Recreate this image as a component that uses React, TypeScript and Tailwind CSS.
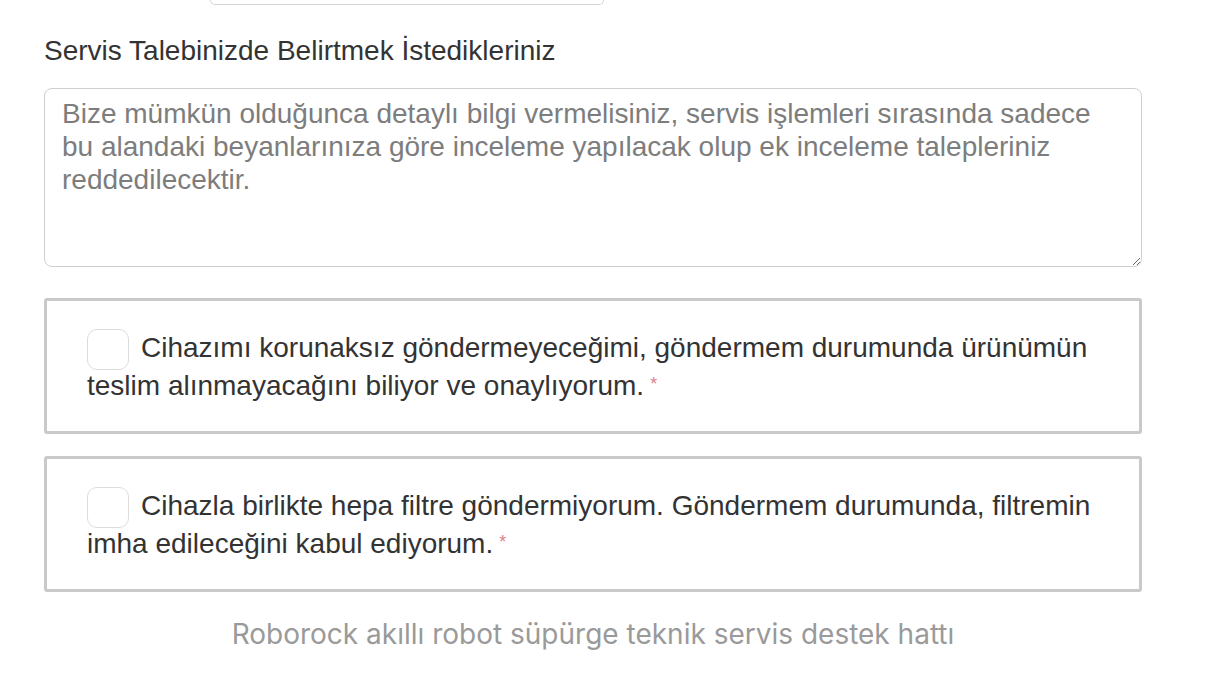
import React from 'react'

const Agreement = ({ text }: { text: string }) => {
  return (
    <div className="rounded-[3px] border-[3px] border-[#c9c9c9] pl-10 pr-6 pt-[28px] pb-[26px]">
      <p className="text-[28px] leading-[38px] text-[#333]">
        <span className="-my-1 mr-3 inline-block h-[41px] w-[42px] rounded-[10px] border border-[#dcdcdc] bg-white align-middle" />
        {text}
        <span className="relative top-[5px] ml-1.5 align-text-top text-[18px] leading-none text-[#e08090]">*</span>
      </p>
    </div>
  )
}

export default function App() {
  return (
    <div className="min-h-[680px] bg-white font-['Liberation_Sans',Arial,sans-serif]">
      <div className="box-content w-[1098px] pl-[44px]">
        <div className="ml-[166px] h-[5px] w-[394px] rounded-b-lg border border-t-0 border-[#d6d6d6]" />

        <label className="mt-[31px] block text-[28px] leading-[30px] text-[#333]">
          Servis Talebinizde Belirtmek İstedikleriniz
        </label>

        <textarea
          className="mt-[22px] block h-[179px] w-full rounded-lg border border-[#cfcfcf] px-[17px] pt-[8px] text-[28px] leading-[33px] text-[#333] outline-none placeholder:text-[#7d7d7d]"
          placeholder="Bize mümkün olduğunca detaylı bilgi vermelisiniz, servis işlemleri sırasında sadece bu alandaki beyanlarınıza göre inceleme yapılacak olup ek inceleme talepleriniz reddedilecektir."
        />

        <div className="mt-[31px] flex flex-col gap-[22px]">
          <Agreement text="Cihazımı korunaksız göndermeyeceğimi, göndermem durumunda ürünümün teslim alınmayacağını biliyor ve onaylıyorum." />
          <Agreement text="Cihazla birlikte hepa filtre göndermiyorum. Göndermem durumunda, filtremin imha edileceğini kabul ediyorum." />
        </div>

        <p className="mt-[26px] text-center font-['Inter',sans-serif] text-[28px] leading-[32px] text-[#9a9a9a]">
          Roborock akıllı robot süpürge teknik servis destek hattı
        </p>
      </div>
    </div>
  )
}
